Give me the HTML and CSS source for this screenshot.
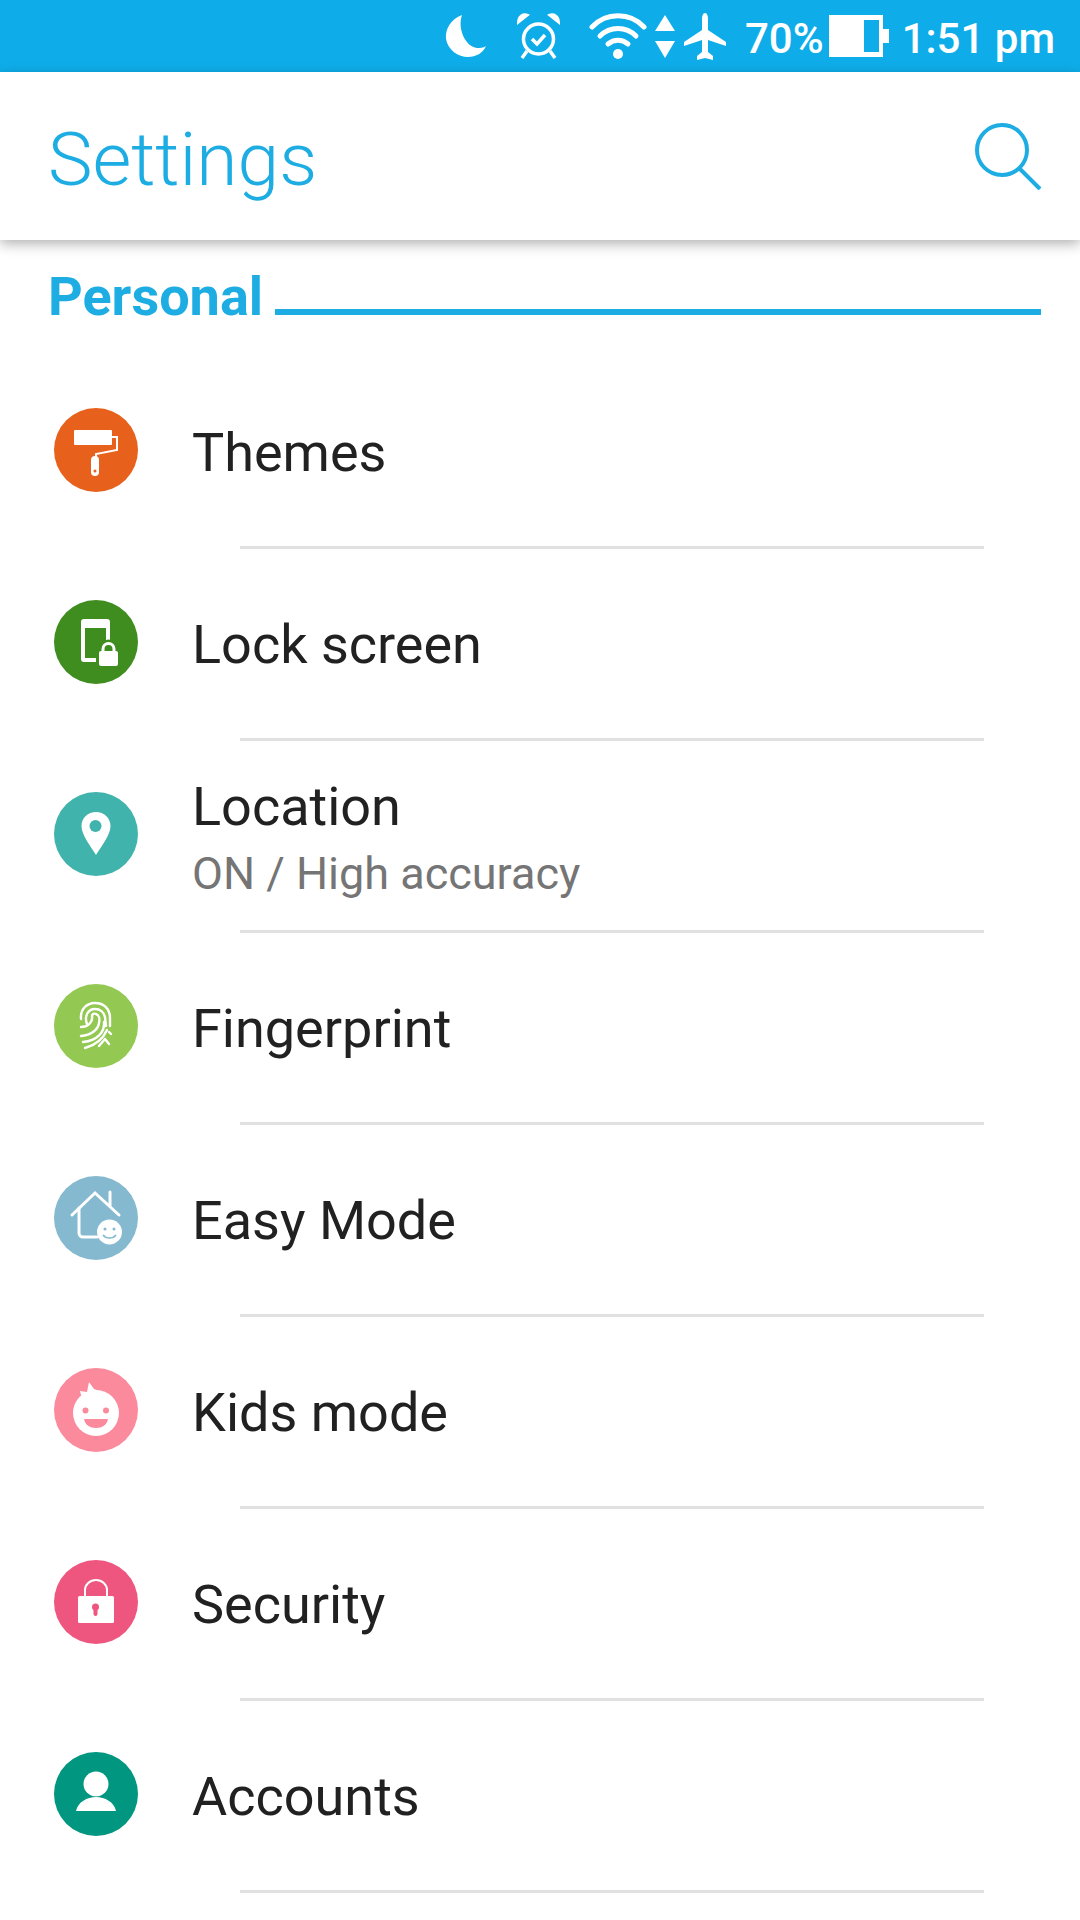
FILE: index.html
```html
<!DOCTYPE html>
<html lang="en">
<head>
  <meta charset="UTF-8">
  <meta name="viewport" content="width=device-width, initial-scale=1.0">
  <title>Settings</title>
  <link rel="stylesheet" href="styles.css">
</head>
<body>
  <div class="status-bar">
    <svg class="st-moon" width="41" height="42" viewBox="0 0 41 42"><path d="M17 0C6 4 0 14 1 24c2 11 12 18 22 18 8 0 15-4 18-11-3 2-6 2-9 2C21 32 12 14 17 0z" fill="#fff"/></svg>
    <svg class="st-alarm" width="43" height="46" viewBox="0 0 43 46" fill="none" stroke="#fff">
      <circle cx="21.5" cy="26" r="15" stroke-width="3.500"/>
      <path d="M15 26l5 5 8-9" stroke-width="3.500"/>
      <path d="M1 10C1 3 6 0 11 2zM42 10c0-7-5-10-10-8z" fill="#fff" stroke-width="2"/>
      <path d="M10 38l-5 7M33 38l5 7" stroke-width="3.500"/>
    </svg>
    <svg class="st-wifi" width="58" height="48" viewBox="0 0 58 48" fill="none" stroke="#fff" stroke-width="5" stroke-linecap="round">
      <path d="M3 15C17 0 41 0 55 15"/>
      <path d="M11 24c10-10 26-10 36 0"/>
      <path d="M19 32c6-5 14-5 20 0"/>
      <circle cx="29" cy="42" r="5" fill="#fff" stroke="none"/>
    </svg>
    <svg class="st-arrows" width="20" height="43" viewBox="0 0 20 43"><path d="M10 0l10 16H0zM0 26h20L10 43z" fill="#fff"/></svg>
    <svg class="st-plane" width="42" height="47" viewBox="0 0 42 47"><path d="M21 0c2 0 3 3 3 6v11l18 12v4l-18-6v12l5 4v4l-8-2-8 2v-4l5-4V27L0 33v-4l18-12V6c0-3 1-6 3-6z" fill="#fff"/></svg>
    <span class="st-text st-percent">70%</span>
    <svg class="st-battery" width="60" height="42" viewBox="0 0 60 42"><path d="M0 0h54v14h6v14h-6v14H0zM35 5v32h15V5z" fill="#fff" fill-rule="evenodd"/></svg>
    <span class="st-text st-time">1:51 pm</span>
  </div>

  <div class="app-bar">
    <h1 class="app-title">Settings</h1>
    <svg class="search-icon" width="67" height="67" viewBox="0 0 67 67" fill="none" stroke="#1dade3" stroke-width="4">
      <circle cx="27" cy="27" r="25"/>
      <path d="M44 45l21 21"/>
    </svg>
  </div>

  <div class="section-head">
    <span class="section-name">Personal</span>
    <span class="section-line"></span>
  </div>

  <div class="list">
    <div class="item">
      <div class="item-row">
        <svg class="item-icon" viewBox="0 0 84 84">
          <circle cx="42" cy="42" r="42" fill="#e8611c"/>
          <rect x="20" y="22" width="38" height="15" rx="1" fill="#fff"/>
          <path d="M58 29h5v13l-21 4v5" fill="none" stroke="#fff" stroke-width="2"/>
          <rect x="37" y="48" width="8" height="20" rx="4" fill="#fff"/>
          <circle cx="41" cy="63" r="1.5" fill="#e8611c"/>
        </svg>
        <div class="item-text"><div class="item-title">Themes</div></div>
      </div>
      <div class="sep"></div>
    </div>

    <div class="item">
      <div class="item-row">
        <svg class="item-icon" viewBox="0 0 84 84">
          <circle cx="42" cy="42" r="42" fill="#3f8c1f"/>
          <path d="M30 19h23a3 3 0 0 1 3 3v24h-4V28H31v30h12v4H30a3 3 0 0 1-3-3V22a3 3 0 0 1 3-3z" fill="#fff"/>
          <path d="M49 52v-3a5.500 5.500 0 0 1 11 0v3" fill="none" stroke="#3f8c1f" stroke-width="8"/>
          <rect x="42" y="49" width="25" height="20" rx="3" fill="#3f8c1f"/>
          <path d="M49 52v-3a5.500 5.500 0 0 1 11 0v3" fill="none" stroke="#fff" stroke-width="3"/>
          <rect x="45" y="51" width="19" height="15" rx="2" fill="#fff"/>
        </svg>
        <div class="item-text"><div class="item-title">Lock screen</div></div>
      </div>
      <div class="sep"></div>
    </div>

    <div class="item">
      <div class="item-row">
        <svg class="item-icon" viewBox="0 0 84 84">
          <circle cx="42" cy="42" r="42" fill="#40b3ac"/>
          <path d="M42 20c8 0 14.500 6 14.500 14 0 9-9 20-14.500 29-5.500-9-14.500-20-14.500-29 0-8 6.500-14 14.500-14z" fill="#fff"/>
          <circle cx="41.500" cy="34" r="6" fill="#40b3ac"/>
        </svg>
        <div class="item-text">
          <div class="item-title">Location</div>
          <div class="item-sub">ON / High accuracy</div>
        </div>
      </div>
      <div class="sep"></div>
    </div>

    <div class="item">
      <div class="item-row">
        <svg class="item-icon" viewBox="0 0 84 84">
          <circle cx="42" cy="42" r="42" fill="#93c953"/>
          <g fill="none" stroke="#fff" stroke-width="2.400" stroke-linecap="round">
            <path d="M27 35c-1-10 6-16 14-16 9 0 15 6 15 15v8"/>
            <path d="M33 40c-3-8 1-15 8-15 5 0 9 3 10 8l1 9"/>
            <path d="M27 43c6 0 12-4 11-11 0-2 2-3 4-2 3 1 4 5 3 9-1 7-8 12-18 13"/>
            <path d="M50 38c1 10-7 19-21 20"/>
            <path d="M53 46c-4 9-11 15-22 18"/>
            <path d="M51 55l4 5M51 55l-6 7M55 48l2 2"/>
          </g>
        </svg>
        <div class="item-text"><div class="item-title">Fingerprint</div></div>
      </div>
      <div class="sep"></div>
    </div>

    <div class="item">
      <div class="item-row">
        <svg class="item-icon" viewBox="0 0 84 84">
          <circle cx="42" cy="42" r="42" fill="#85b9cf"/>
          <g fill="none" stroke="#fff" stroke-width="3" stroke-linecap="round">
            <path d="M18 39l23-22 24 22"/>
            <path d="M56 16v14"/>
            <path d="M25 32v25a4 4 0 0 0 4 4h14"/>
          </g>
          <circle cx="55.500" cy="56" r="12.500" fill="#fff"/>
          <circle cx="51" cy="53" r="1.500" fill="#85b9cf"/>
          <circle cx="60" cy="53" r="1.500" fill="#85b9cf"/>
          <path d="M49 59c3 4 10 4 13 0" fill="none" stroke="#85b9cf" stroke-width="1.600"/>
        </svg>
        <div class="item-text"><div class="item-title">Easy Mode</div></div>
      </div>
      <div class="sep"></div>
    </div>

    <div class="item">
      <div class="item-row">
        <svg class="item-icon" viewBox="0 0 84 84">
          <circle cx="42" cy="42" r="42" fill="#fb8a9d"/>
          <circle cx="42" cy="45" r="23" fill="#fff"/>
          <path d="M27 27l-1-4 7 1 2-10 5 7 8 3-6 6z" fill="#fff"/>
          <circle cx="31.500" cy="42.500" r="3" fill="#fb8a9d"/>
          <circle cx="52" cy="42.500" r="3" fill="#fb8a9d"/>
          <path d="M30 51h24c-1 6-6 9-12 9s-11-3-12-9z" fill="#fb8a9d"/>
        </svg>
        <div class="item-text"><div class="item-title">Kids mode</div></div>
      </div>
      <div class="sep"></div>
    </div>

    <div class="item">
      <div class="item-row">
        <svg class="item-icon" viewBox="0 0 84 84">
          <circle cx="42" cy="42" r="42" fill="#ee5680"/>
          <path d="M31 37v-7a11 10 0 0 1 22 0v7" fill="none" stroke="#fff" stroke-width="2"/>
          <rect x="24" y="36" width="36" height="27" rx="1.500" fill="#fff"/>
          <circle cx="41.500" cy="47" r="3.500" fill="#ee5680"/>
          <rect x="39.500" y="47" width="4" height="9" rx="2" fill="#ee5680"/>
        </svg>
        <div class="item-text"><div class="item-title">Security</div></div>
      </div>
      <div class="sep"></div>
    </div>

    <div class="item">
      <div class="item-row">
        <svg class="item-icon" viewBox="0 0 84 84">
          <circle cx="42" cy="42" r="42" fill="#00967f"/>
          <circle cx="42" cy="32" r="12.500" fill="#fff"/>
          <path d="M22 59c2-9 11-14 20-14s18 5 20 14z" fill="#fff"/>
        </svg>
        <div class="item-text"><div class="item-title">Accounts</div></div>
      </div>
      <div class="sep"></div>
    </div>
  </div>
</body>
</html>
```

FILE: styles.css
```css
body {
  font-family: Roboto, "Noto Sans", sans-serif;
  margin: 0;
  padding: 0;
  width: 1080px;
  height: 1920px;
  overflow: hidden;
  background-color: #fff;
}

.status-bar {
  height: 72px;
  background-color: #0eade9;
  display: flex;
  align-items: center;
  justify-content: flex-end;
  padding-right: 25px;
  box-sizing: border-box;
}

.st-moon {
  margin-right: 31px;
}

.st-alarm {
  margin-right: 29px;
}

.st-wifi {
  margin-right: 8px;
}

.st-arrows {
  margin-right: 9px;
}

.st-plane {
  margin-right: 19px;
}

.st-text {
  color: #fff;
  font-size: 42px;
  font-weight: 500;
  line-height: 72px;
  padding-top: 5px;
}

.st-percent {
  margin-right: 5px;
}

.st-battery {
  margin-right: 13px;
}

.app-bar {
  height: 168px;
  padding: 0 38px 0 48px;
  display: flex;
  align-items: center;
  justify-content: space-between;
  background: #fff;
  box-shadow: 0 4px 12px rgba(0, 0, 0, 0.3);
  position: relative;
}

.app-title {
  margin: 6px 0 0;
  font-size: 75px;
  font-weight: 300;
  color: #1dade3;
}

.section-head {
  display: flex;
  align-items: flex-end;
  height: 75px;
  padding: 0 39px 0 48px;
}

.section-name {
  font-size: 54px;
  font-weight: 700;
  line-height: 60px;
  margin-bottom: -12px;
  color: #1dade3;
}

.section-line {
  flex: 1;
  height: 6px;
  margin-left: 12px;
  background-color: #1dade3;
}

.list {
  margin-top: 42px;
}

.item-row {
  height: 189px;
  padding: 0 0 3px 54px;
  box-sizing: border-box;
  display: flex;
  align-items: center;
}

.item-icon {
  width: 84px;
  height: 84px;
  flex-shrink: 0;
}

.item-text {
  margin: 6px 0 0 54px;
}

.item-title {
  font-size: 54px;
  color: #212121;
  line-height: 62px;
}

.item-sub {
  margin: 8px 0 -3px;
  font-size: 45px;
  color: #757575;
  line-height: 56px;
}

.sep {
  height: 3px;
  margin: 0 96px 0 240px;
  background-color: #e0e0e0;
}
```
